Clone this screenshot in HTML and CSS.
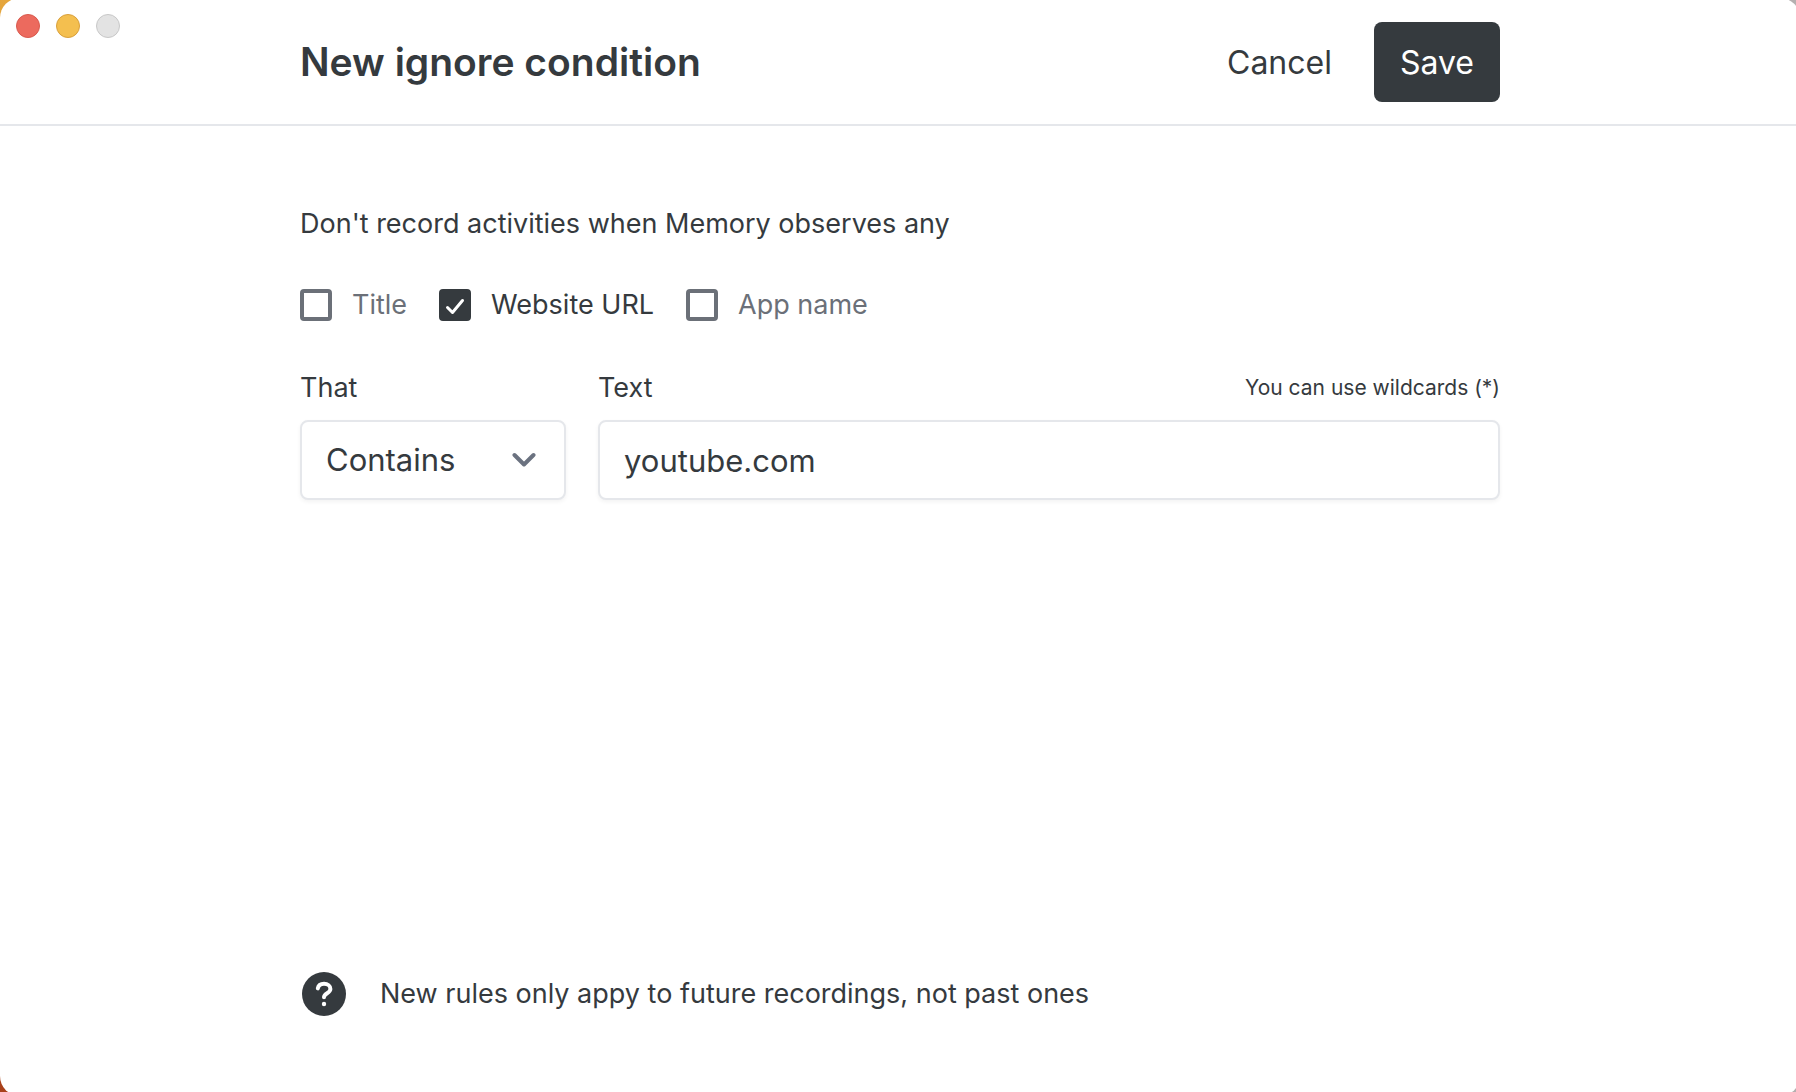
FILE: index.html
```html
<!DOCTYPE html>
<html lang="en">
<head>
  <meta charset="UTF-8">
  <meta name="viewport" content="width=device-width, initial-scale=1.0">
  <title>New ignore condition</title>
  <link rel="stylesheet" href="styles.css">
</head>
<body>
  <form class="window">
    <div class="traffic-lights">
      <span class="light close"></span>
      <span class="light minimize"></span>
      <span class="light disabled"></span>
    </div>

    <header class="header">
      <div class="container header-row">
        <h1>New ignore condition</h1>
        <div class="actions">
          <button type="button" class="btn">Cancel</button>
          <button type="button" class="btn btn-primary">Save</button>
        </div>
      </div>
    </header>

    <main class="container content">
      <p class="intro">Don't record activities when Memory observes any</p>

      <div class="checks">
        <label class="check"><input type="checkbox"><span>Title</span></label>
        <label class="check"><input type="checkbox" checked><span>Website URL</span></label>
        <label class="check"><input type="checkbox"><span>App name</span></label>
      </div>

      <div class="fields">
        <div class="field">
          <div class="field-head">
            <label for="match">That</label>
          </div>
          <div class="select">
            <select id="match" class="control">
              <option>Contains</option>
            </select>
            <svg class="chevron" width="24" height="16" viewBox="0 0 24 16" fill="none">
              <path d="M2.5 3 12 12.5 21.5 3" stroke="#6b7280" stroke-width="4" stroke-linecap="round" stroke-linejoin="round"/>
            </svg>
          </div>
        </div>
        <div class="field">
          <div class="field-head">
            <label for="text">Text</label>
            <span class="hint">You can use wildcards (*)</span>
          </div>
          <input id="text" class="control" type="text" value="youtube.com">
        </div>
      </div>
    </main>

    <footer class="container footer">
      <svg width="44" height="44" viewBox="0 0 44 44" fill="none">
        <circle cx="22" cy="22" r="22" fill="#353a3e"/>
        <path d="M15.8 16.4C16.4 13.4 18.9 11.8 22 11.8c3.7 0 6.4 2.1 6.4 5.2 0 4.3-6.4 4.1-6.4 8.2" stroke="#fff" stroke-width="4" stroke-linecap="round"/>
        <circle cx="22" cy="32" r="2.2" fill="#fff"/>
      </svg>
      <p>New rules only appy to future recordings, not past ones</p>
    </footer>
  </form>
</body>
</html>
```
FILE: styles.css
```css
* {
  box-sizing: border-box;
}

body {
  margin: 0;
  overflow: hidden;
  background: linear-gradient(90deg, transparent 50%, #b5b0b0 50%), linear-gradient(#e5a63c, #a8401a);
  color: #353a3e;
  font-family: Inter, "Liberation Sans", sans-serif;
  font-size: 27px;
  line-height: 36px;
}

h1,
p {
  margin: 0;
}

/* the window runs slightly past the edges of the screen */
.window {
  display: flex;
  flex-direction: column;
  width: calc(100% + 4px);
  height: calc(100vh + 6px);
  margin-top: -2px;
  padding-top: 2px;
  border-radius: 20px;
  background: #fff;
}

.traffic-lights {
  position: absolute;
  top: 14px;
  left: 16px;
  display: flex;
  gap: 16px;
}

.light {
  width: 24px;
  height: 24px;
  border: 1px solid #d95a4e;
  border-radius: 50%;
  background: #ec6a5e;
}

.minimize {
  border-color: #d9a03c;
  background: #f4bf4f;
}

.disabled {
  border-color: #c8c8c8;
  background: #e3e3e3;
}

.container {
  width: 100%;
  max-width: 1200px;
  margin: 0 auto;
}

.header {
  padding: 22px 0;
  border-bottom: 2px solid #e5e7eb;
}

.header-row {
  display: flex;
  align-items: center;
  justify-content: space-between;
}

h1 {
  font-size: 39px;
  font-weight: 600;
  line-height: 48px;
}

.actions {
  display: flex;
  gap: 16px;
}

.btn {
  height: 80px;
  padding: 2px 26px 0;
  border: 0;
  border-radius: 8px;
  background: none;
  color: inherit;
  font: inherit;
  font-size: 32px;
}

.btn-primary {
  background: #353a3e;
  color: #fff;
}

.content {
  flex: 1;
  padding-top: 80px;
}

.checks {
  display: flex;
  gap: 32px;
  margin: 45px 0 47px;
}

.check {
  display: flex;
  align-items: center;
  gap: 20px;
  color: #6b7078;
}

.check:has(:checked) {
  color: #353a3e;
}

.check input {
  width: 32px;
  height: 32px;
  margin: 0;
  border: 4px solid #6b7078;
  border-radius: 4px;
  appearance: none;
}

.check input:checked {
  border-color: #353a3e;
  background: #353a3e url("data:image/svg+xml,%3Csvg xmlns='http://www.w3.org/2000/svg' viewBox='0 0 24 24' fill='none' stroke='white' stroke-width='3' stroke-linecap='round' stroke-linejoin='round'%3E%3Cpath d='M4.5 14.5l5 5 10-12'/%3E%3C/svg%3E") center / 24px no-repeat;
}

.fields {
  display: grid;
  grid-template-columns: 266px 1fr;
  gap: 32px;
}

.field-head {
  display: flex;
  align-items: center;
  justify-content: space-between;
  margin-bottom: 14px;
}

.hint {
  font-size: 21px;
}

.control {
  display: block;
  width: 100%;
  height: 80px;
  padding: 0 24px;
  border: 2px solid #e5e7eb;
  border-radius: 8px;
  background: #fff;
  box-shadow: 0 2px 4px rgba(0, 0, 0, 0.05);
  color: inherit;
  font: inherit;
  font-size: 31px;
  appearance: none;
}

.select {
  position: relative;
}

.chevron {
  position: absolute;
  top: 32px;
  right: 30px;
  pointer-events: none;
}

.footer {
  display: flex;
  align-items: center;
  gap: 34px;
  padding: 0 2px 80px;
}
```
